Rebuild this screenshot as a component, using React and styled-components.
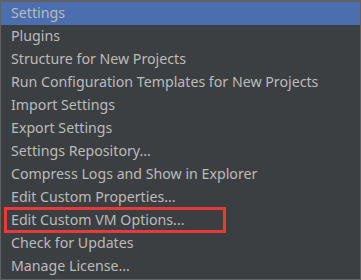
import React from "react";
import styled, { createGlobalStyle } from "styled-components";

const Global = createGlobalStyle`
  html, body { margin: 0; padding: 0; background: #3c3f41; }
  * { box-sizing: border-box; }
`;

const Menu = styled.div`
  width: 361px;
  height: 280px;
  background: #3c3f41;
  border: 1px solid #616161;
  border-top-width: 2px;
  display: flex;
  flex-direction: column;
  font-family: "Noto Sans", "Noto Sans CJK SC", sans-serif;
  font-size: 14.2px;
  color: #bbbbbb;
  overflow: hidden;
`;

const Item = styled.div`
  position: relative;
  height: 23px;
  flex: none;
  display: flex;
  align-items: center;
  padding: 0 0 2px 10px;
  white-space: nowrap;
  background: ${(p) => (p.$selected ? "#4b6eaf" : "transparent")};
`;

const Highlight = styled.div`
  position: absolute;
  left: 3px;
  top: -2px;
  width: 222px;
  height: 26px;
  border: 3px solid #e8393b;
  pointer-events: none;
`;

const items = [
  "Settings",
  "Plugins",
  "Structure for New Projects",
  "Run Configuration Templates for New Projects",
  "Import Settings",
  "Export Settings",
  "Settings Repository...",
  "Compress Logs and Show in Explorer",
  "Edit Custom Properties...",
  "Edit Custom VM Options...",
  "Check for Updates",
  "Manage License...",
];

export default function App() {
  return (
    <>
      <Global />
      <Menu>
        {items.map((t, i) => (
          <Item key={t} $selected={i === 0}>
            {t}
            {t === "Edit Custom VM Options..." && <Highlight />}
          </Item>
        ))}
      </Menu>
    </>
  );
}
